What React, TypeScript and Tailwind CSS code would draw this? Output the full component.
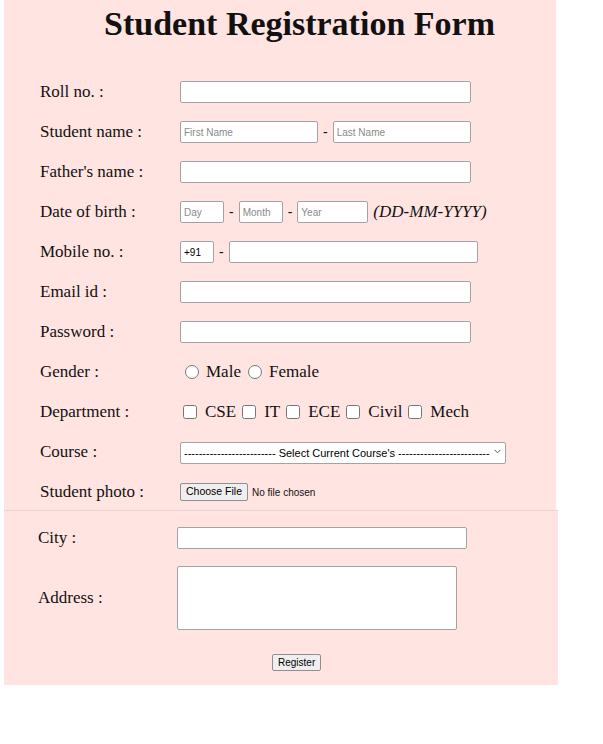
import React from "react";

const serif = { fontFamily: '"Liberation Serif", "Times New Roman", serif' };

const box =
  "h-[22px] bg-white border border-[#a3a3a3] rounded-[2px] px-[3px] text-[10px] text-black placeholder:text-[#8a8a8a] outline-none";

const Row: React.FC<{ label: string; children: React.ReactNode }> = ({ label, children }) => (
  <div className="flex items-center h-[40px]">
    <div className="w-[176px] shrink-0 pl-[36px] text-[17px]">{label}</div>
    <div className="flex items-center">{children}</div>
  </div>
);

const Dash = () => <span className="mx-[5px] text-[14px] font-['Liberation_Sans']">-</span>;

const dashes = "-".repeat(25);

export default function App() {
  return (
    <div className="bg-white min-h-[744px] font-['Liberation_Serif'] text-[#111]" style={serif}>
      <form className="ml-[4px] w-[552px] h-[510px] bg-[#ffe4e1]">
        <h1 className="text-center font-bold text-[34px] leading-[40px] pt-[4px] h-[72px] pl-[39px]">
          Student Registration Form
        </h1>

        <Row label="Roll no. :">
          <input className={`${box} w-[291px]`} />
        </Row>

        <Row label="Student name :">
          <input className={`${box} w-[138px] font-['Liberation_Sans']`} placeholder="First Name" />
          <Dash />
          <input className={`${box} w-[138px] font-['Liberation_Sans']`} placeholder="Last Name" />
        </Row>

        <Row label="Father's name :">
          <input className={`${box} w-[291px]`} />
        </Row>

        <Row label="Date of birth :">
          <input className={`${box} w-[44px] font-['Liberation_Sans']`} placeholder="Day" />
          <Dash />
          <input className={`${box} w-[44px] font-['Liberation_Sans']`} placeholder="Month" />
          <Dash />
          <input className={`${box} w-[71px] font-['Liberation_Sans']`} placeholder="Year" />
          <span className="ml-[5px] italic text-[17px]">(DD-MM-YYYY)</span>
        </Row>

        <Row label="Mobile no. :">
          <input className={`${box} w-[34px] font-['Liberation_Sans']`} defaultValue="+91" />
          <Dash />
          <input className={`${box} w-[249px]`} />
        </Row>

        <Row label="Email id :">
          <input className={`${box} w-[291px]`} />
        </Row>

        <Row label="Password :">
          <input type="password" className={`${box} w-[291px]`} />
        </Row>

        <Row label="Gender :">
          <label className="flex items-center text-[17px] ml-[5px]">
            <input type="radio" name="gender" className="w-[14px] h-[14px] m-0 mr-[7px]" />
            Male
          </label>
          <label className="flex items-center text-[17px] ml-[7px]">
            <input type="radio" name="gender" className="w-[14px] h-[14px] m-0 mr-[7px]" />
            Female
          </label>
        </Row>

        <Row label="Department :">
          {["CSE", "IT", "ECE", "Civil", "Mech"].map((d, i) => (
            <label key={d} className={`flex items-center text-[17px] ${i === 0 ? "ml-[3px]" : "ml-[6px]"}`}>
              <input type="checkbox" className="w-[14px] h-[14px] m-0 mr-[8px]" />
              {d}
            </label>
          ))}
        </Row>

        <Row label="Course :">
          <div className="relative">
            <select
              className={`${box} w-[326px] appearance-none text-[11px] text-left font-['Liberation_Sans'] pr-[14px]`}
              defaultValue=""
            >
              <option value="">
                {dashes} Select Current Course's {dashes}
              </option>
              <option>B.Tech</option>
              <option>M.Tech</option>
            </select>
            <svg
              className="absolute right-[5px] top-[9px] pointer-events-none"
              width="7"
              height="5"
              viewBox="0 0 7 5"
              fill="none"
              stroke="#555"
              strokeWidth="1"
            >
              <path d="M0.5 0.8 L3.5 3.8 L6.5 0.8" />
            </svg>
          </div>
        </Row>

        <Row label="Student photo :">
          <div className="flex items-center font-['Liberation_Sans'] text-[10px]">
            <button
              type="button"
              className="h-[18px] px-[5px] bg-[#efefef] border border-[#8f8f8f] rounded-[2px] text-[10.5px] text-black"
            >
              Choose File
            </button>
            <span className="ml-[4px]">No file chosen</span>
          </div>
        </Row>
      </form>

      <div className="ml-[4px] w-[554px] h-[175px] bg-[#ffe4e1] border-t border-[#ecd3d0] pt-[14px]">
        <div className="flex items-center">
          <div className="w-[173px] shrink-0 pl-[34px] text-[17px]">City :</div>
          <input className={`${box} w-[290px]`} />
        </div>
        <div className="flex items-center mt-[15px]">
          <div className="w-[173px] shrink-0 pl-[34px] text-[17px]">Address :</div>
          <textarea className="w-[280px] h-[64px] bg-white border border-[#a3a3a3] rounded-[2px] resize-none outline-none" />
        </div>
        <div className="flex mt-[24px] ml-[268px]">
          <button
            type="button"
            className="h-[17px] px-[5px] bg-[#efefef] border border-[#8f8f8f] rounded-[2px] text-[10px] text-black font-['Liberation_Sans']"
          >
            Register
          </button>
        </div>
      </div>
    </div>
  );
}
